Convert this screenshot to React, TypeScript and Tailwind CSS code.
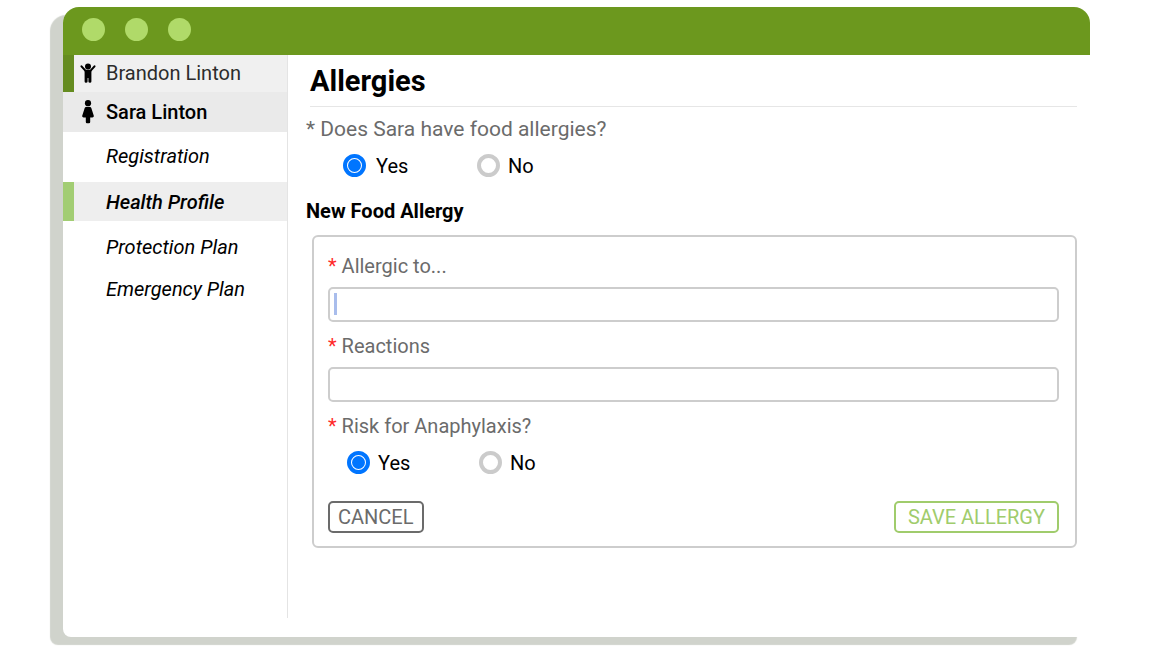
import type { ReactNode } from "react";

function ChildIcon() {
  return (
    <svg viewBox="0 0 16 21" className="h-[21px] w-4 shrink-0" aria-hidden="true">
      <circle cx="8" cy="3.4" r="3" />
      <path
        d="M1.5 3.4 L5.6 7.9 H10.4 L14.5 3.4"
        fill="none"
        stroke="currentColor"
        strokeWidth="2.1"
        strokeLinecap="round"
        strokeLinejoin="round"
      />
      <path d="M4.6 7 H11.4 V18.6 Q11.4 19.8 10 19.8 Q8.4 19.8 8.4 18.6 V15 H7.6 V18.6 Q7.6 19.8 6 19.8 Q4.6 19.8 4.6 18.6 Z" />
    </svg>
  );
}

function WomanIcon() {
  return (
    <svg viewBox="0 0 16 24" className="h-6 w-4 shrink-0" aria-hidden="true">
      <circle cx="8" cy="3.2" r="3.1" />
      <path d="M6 7 H10 Q11 7 11.3 8 L13.8 15.8 Q14 17 13 17.2 L12.4 17.6 H10.2 V22 Q10.2 23.2 9 23.2 H7 Q5.8 23.2 5.8 22 V17.6 H3.6 L3 17.2 Q2 17 2.2 15.8 L4.7 8 Q5 7 6 7 Z" />
    </svg>
  );
}

function Choice({
  name,
  label,
  checked,
  className,
}: {
  name: string;
  label: string;
  checked?: boolean;
  className: string;
}) {
  return (
    <label className={`flex items-center text-xl text-black ${className}`}>
      <input
        type="radio"
        name={name}
        defaultChecked={checked}
        className="size-[23px] shrink-0 appearance-none rounded-full border-4 border-[#cbcbcb] bg-clip-content p-px checked:border-[#0075ff] checked:bg-[#0075ff]"
      />
      <span className="pt-px">{label}</span>
    </label>
  );
}

function Required({ children }: { children: ReactNode }) {
  return (
    <>
      <span className="text-[#ff2a2a]">*</span> {children}
    </>
  );
}

export default function App() {
  return (
    <div className="bg-white px-[62px] pt-[7px] pb-[11px] font-['Roboto',sans-serif] text-xl text-black">
      <div className="ml-px rounded-t-2xl rounded-b-lg bg-white shadow-[-13px_8px_1px_#d0d3cc]">
        <header className="flex h-12 items-center gap-5 rounded-t-2xl bg-[#6c981e] px-[19px] pb-[3px]">
          <span className="size-[23px] rounded-full bg-[#b0da69]" />
          <span className="size-[23px] rounded-full bg-[#b0da69]" />
          <span className="size-[23px] rounded-full bg-[#b0da69]" />
        </header>

        <div className="flex pb-[19px]">
          <nav className="min-h-[563px] w-[225px] shrink-0 border-r border-[#e4e4e4]">
            <a
              href="#brandon"
              className="flex h-[37px] items-center gap-[10px] border-l-[11px] border-[#658c20] bg-[#f0f0f0] pb-px pl-[6px]"
            >
              <ChildIcon />
              <span className="text-[#2c2c2c]">Brandon Linton</span>
            </a>
            <a href="#sara" className="flex h-10 items-center gap-[10px] bg-[#eaeaea] pb-px pl-[17px] font-medium">
              <WomanIcon />
              Sara Linton
            </a>
            <a href="#registration" className="flex h-[50px] items-center pb-[2px] pl-[43px] italic">
              Registration
            </a>
            <a
              href="#health"
              className="flex h-[39px] items-center border-l-[11px] border-[#a2cd73] bg-[#eeeeee] pl-8 font-medium italic"
            >
              Health Profile
            </a>
            <a href="#protection" className="flex h-[51px] items-center pl-[43px] italic">
              Protection Plan
            </a>
            <a href="#emergency" className="flex h-[34px] items-center pl-[43px] italic">
              Emergency Plan
            </a>
          </nav>

          <main className="min-w-0 flex-1 pr-[13px] pl-[18px]">
            <h1 className="ml-1 flex h-[52px] items-center border-b border-[#e6e6e6] pt-px text-[29px] font-bold">
              Allergies
            </h1>

            <fieldset>
              <legend className="pt-2 text-[21px] leading-7 text-[#6b6b6b]">* Does Sara have food allergies?</legend>
              <div className="flex pt-2 pl-[37px]">
                <Choice name="food" label="Yes" checked className="w-[134px] gap-[10px]" />
                <Choice name="food" label="No" className="gap-2" />
              </div>
            </fieldset>

            <h2 className="pt-[17px] leading-7 font-bold">New Food Allergy</h2>

            <form className="mt-[10px] ml-[6px] rounded-md border-2 border-[#cdcdcd] pt-[15px] pr-4 pb-[13px] pl-[14px] text-[#6b6b6b]">
              <label htmlFor="allergen" className="block leading-7">
                <Required>Allergic to...</Required>
              </label>
              <div className="relative mt-[7px]">
                <input
                  id="allergen"
                  type="text"
                  className="block h-[35px] w-full rounded-[5px] border-2 border-[#cdcdcd] px-2 text-black"
                />
                <span className="absolute top-[6px] left-[6px] h-[22px] w-[3px] bg-[#a9bdec]" />
              </div>

              <label htmlFor="reactions" className="mt-[10px] block leading-7">
                <Required>Reactions</Required>
              </label>
              <input
                id="reactions"
                type="text"
                className="mt-[7px] block h-[35px] w-full rounded-[5px] border-2 border-[#cdcdcd] px-2 text-black"
              />

              <fieldset>
                <legend className="pt-[10px] leading-7">
                  <Required>Risk for Anaphylaxis?</Required>
                </legend>
                <div className="flex pt-2 pl-[19px]">
                  <Choice name="risk" label="Yes" checked className="w-[132px] gap-2" />
                  <Choice name="risk" label="No" className="gap-2" />
                </div>
              </fieldset>

              <div className="mt-6 flex items-center justify-between">
                <button type="button" className="h-8 rounded-[5px] border-2 border-[#6b6b6b] px-2">
                  CANCEL
                </button>
                <button type="button" className="h-8 rounded-[5px] border-2 border-[#a0cc6c] px-3 text-[#a0cc6c]">
                  SAVE ALLERGY
                </button>
              </div>
            </form>
          </main>
        </div>
      </div>
    </div>
  );
}
